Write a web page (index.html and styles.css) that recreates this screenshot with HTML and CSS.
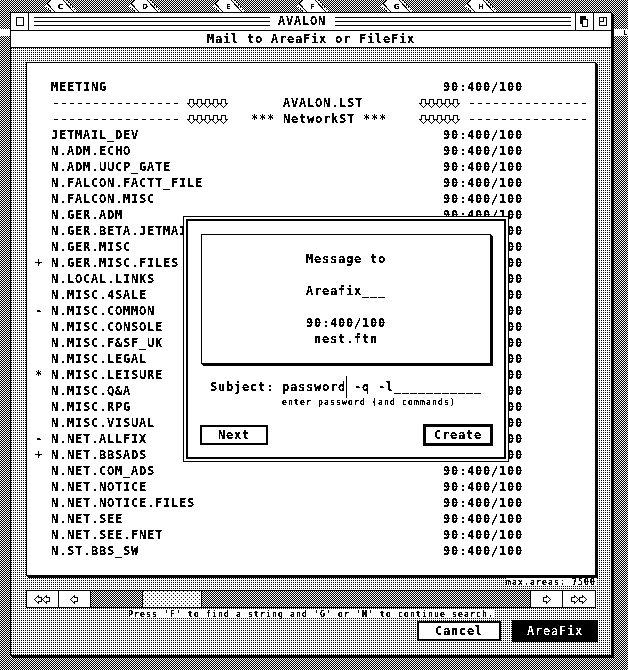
FILE: index.html
```
<!DOCTYPE html>
<html lang="en">
<head>
<meta charset="utf-8">
<title>AVALON</title>
<link rel="stylesheet" href="styles.css">
</head>
<body>
<svg class="defs" width="0" height="0" aria-hidden="true">
  <defs>
    <filter id="mono" x="0" y="0" width="100%" height="100%" color-interpolation-filters="sRGB">
      <feComponentTransfer>
        <feFuncR type="discrete" tableValues="0 0 0 1 1"/>
        <feFuncG type="discrete" tableValues="0 0 0 1 1"/>
        <feFuncB type="discrete" tableValues="0 0 0 1 1"/>
      </feComponentTransfer>
    </filter>
    <symbol id="drive" viewBox="0 0 32 12">
      <path fill="#fff" d="M0 7L5 0H21L32 12H7Z"/>
      <g shape-rendering="crispEdges" fill="none" stroke="#000">
        <path d="M5.500 0L2.500 4L10 12M18 0L29 12"/>
        <path stroke-dasharray="1.500 1.500" d="M1 7L6 12M3 8L7 12M21 0L32 12"/>
      </g>
    </symbol>
    <symbol id="down5" viewBox="0 0 41 9">
      <path id="d" fill="none" stroke="#000" d="M2.5 .5h4v4h2l-4 4l-4-4h2z"/>
      <use href="#d" x="8"/><use href="#d" x="16"/><use href="#d" x="24"/><use href="#d" x="32"/>
    </symbol>
    <symbol id="left" viewBox="0 0 9 9"><path fill="#fff" stroke="#000" d="M4.5 .5l-4 4l4 4v-2h3v-4h-3z"/></symbol>
  </defs>
</svg>
<div class="desktop">
  <div class="drives">
    <div class="drive"><svg><use href="#drive"/></svg><b>C</b></div>
    <div class="drive"><svg><use href="#drive"/></svg><b>D</b></div>
    <div class="drive"><svg><use href="#drive"/></svg><b>E</b></div>
    <div class="drive"><svg><use href="#drive"/></svg><b>F</b></div>
    <div class="drive"><svg><use href="#drive"/></svg><b>G</b></div>
    <div class="drive"><svg><use href="#drive"/></svg><b>H</b></div>
  </div>
  <div class="label-band"><b>L</b></div>
  <div class="window">
    <div class="titlebar">
      <div class="closer"><i></i></div>
      <div class="stripes"></div>
      <div class="title">AVALON</div>
      <div class="stripes"></div>
      <div class="gadget"><svg width="9" height="11"><path d="M0 0h6v8H0z"/><path fill="#fff" stroke="#000" d="M2.5 3.5h5v7h-5z"/></svg></div>
      <div class="gadget"><svg width="8" height="9"><path fill="none" stroke="#000" d="M.5 .5h7v8h-7zM4.5 .5v4h-4"/></svg></div>
    </div>
    <div class="subtitle">Mail to AreaFix or FileFix</div>
    <div class="content">
      <div class="panel list">
        <div class="row">  MEETING                                          90:400/100</div>
        <div class="row">  <span class="dash">----------------</span> <svg class="arrows"><use href="#down5"/></svg>       AVALON.LST       <svg class="arrows"><use href="#down5"/></svg> <span class="dash">---------------</span></div>
        <div class="row">  <span class="dash">----------------</span> <svg class="arrows"><use href="#down5"/></svg>   *** NetworkST ***    <svg class="arrows"><use href="#down5"/></svg> <span class="dash">---------------</span></div>
        <div class="row">  JETMAIL_DEV                                      90:400/100</div>
        <div class="row">  N.ADM.ECHO                                       90:400/100</div>
        <div class="row">  N.ADM.UUCP_GATE                                  90:400/100</div>
        <div class="row">  N.FALCON.FACTT_FILE                              90:400/100</div>
        <div class="row">  N.FALCON.MISC                                    90:400/100</div>
        <div class="row">  N.GER.ADM                                        90:400/100</div>
        <div class="row">  N.GER.BETA.JETMAIL                               90:400/100</div>
        <div class="row">  N.GER.MISC                                       90:400/100</div>
        <div class="row">+ N.GER.MISC.FILES                                 90:400/100</div>
        <div class="row">  N.LOCAL.LINKS                                    90:400/100</div>
        <div class="row">  N.MISC.4SALE                                     90:400/100</div>
        <div class="row">- N.MISC.COMMON                                    90:400/100</div>
        <div class="row">  N.MISC.CONSOLE                                   90:400/100</div>
        <div class="row">  N.MISC.F&amp;SF_UK                                   90:400/100</div>
        <div class="row">  N.MISC.LEGAL                                     90:400/100</div>
        <div class="row">* N.MISC.LEISURE                                   90:400/100</div>
        <div class="row">  N.MISC.Q&amp;A                                       90:400/100</div>
        <div class="row">  N.MISC.RPG                                       90:400/100</div>
        <div class="row">  N.MISC.VISUAL                                    90:400/100</div>
        <div class="row">- N.NET.ALLFIX                                     90:400/100</div>
        <div class="row">+ N.NET.BBSADS                                     90:400/100</div>
        <div class="row">  N.NET.COM_ADS                                    90:400/100</div>
        <div class="row">  N.NET.NOTICE                                     90:400/100</div>
        <div class="row">  N.NET.NOTICE.FILES                               90:400/100</div>
        <div class="row">  N.NET.SEE                                        90:400/100</div>
        <div class="row">  N.NET.SEE.FNET                                   90:400/100</div>
        <div class="row">  N.ST.BBS_SW                                      90:400/100</div>
      </div>
      <div class="small limit">max.areas: 7500</div>
      <div class="scrollbar">
        <div class="sbtn"><svg class="arr"><use href="#left"/></svg><svg class="arr"><use href="#left"/></svg></div>
        <div class="sbtn"><svg class="arr"><use href="#left"/></svg></div>
        <div class="track"><div class="thumb"></div></div>
        <div class="sbtn flip"><svg class="arr"><use href="#left"/></svg></div>
        <div class="sbtn flip end"><svg class="arr"><use href="#left"/></svg><svg class="arr"><use href="#left"/></svg></div>
      </div>
      <div class="small hint">Press 'F' to find a string and 'G' or 'N' to continue search.</div>
      <div class="actions">
        <div class="button cancel">Cancel</div>
        <div class="button selected">AreaFix</div>
      </div>
    </div>
  </div>
  <div class="dialog">
    <div class="dialog-inner">
      <div class="panel message">Message to

Areafix___

90:400/100
 nest.ftn</div>
      <div class="field">Subject: password<i class="caret"></i> -q -l___________</div>
      <div class="small help">enter password (and commands)</div>
      <div class="dialog-actions">
        <div class="button next">Next</div>
        <div class="button create">Create</div>
      </div>
    </div>
  </div>
</div>
</body>
</html>
```
FILE: styles.css
```
* { box-sizing: border-box; }

body {
  margin: 0;
  background: #fff;
  color: #000;
  font: bold 12px/16px "DejaVu Sans Mono", "Liberation Mono", monospace;
  letter-spacing: 0.776px;
  font-variant-ligatures: none;
}

.defs { position: absolute; }

.desktop {
  position: relative;
  width: 628px;
  height: 670px;
  overflow: hidden;
  filter: url(#mono);
  background: repeating-conic-gradient(#000 0 25%, #fff 0 50%) 0 0 / 2px 2px;
}

.drives {
  display: flex;
  gap: 52px;
  height: 12px;
  padding-left: 45px;
}
.drive { position: relative; width: 32px; height: 12px; }
.drive svg { display: block; width: 32px; height: 12px; }
.drive b {
  position: absolute;
  left: 13px;
  top: 2px;
  font: bold 7px/10px "DejaVu Sans", sans-serif;
  letter-spacing: 0;
}

.label-band {
  position: absolute;
  left: 0;
  right: 0;
  top: 29px;
  height: 7px;
  background: #fff;
}
.label-band b {
  display: block;
  margin-left: 623px;
  font: bold 7px/8px "DejaVu Sans", sans-serif;
  letter-spacing: 0;
}

.window {
  position: relative;
  width: 602px;
  height: 644px;
  margin-left: 10px;
  border: 1px solid #000;
  box-shadow: 1px 1px #000, 2px 2px #000;
  background: #fff;
}

.titlebar {
  display: flex;
  height: 18px;
  border-bottom: 1px solid #000;
}
.closer {
  width: 18px;
  border-right: 1px solid #000;
  padding: 4px 0 0 5px;
}
.closer i {
  display: block;
  width: 8px;
  height: 9px;
  border: 1px solid #000;
}
.stripes {
  flex: 1;
  height: 9px;
  margin: 4px 4px 0 5px;
  background: repeating-linear-gradient(#000 0 1px, #fff 1px 4px);
}
.title { width: 56px; line-height: 17px; padding-left: 4px; white-space: nowrap; }
.gadget {
  display: flex;
  align-items: center;
  justify-content: center;
  width: 18px;
  border-left: 1px solid #000;
}

.subtitle {
  height: 17px;
  border-bottom: 1px solid #000;
  text-align: center;
  line-height: 16px;
}

.content {
  height: 607px;
  padding: 14px 15px 0;
  background: conic-gradient(#fff 75%, #000 0) 0 0 / 2px 2px;
}

.panel {
  border: 1px solid #000;
  box-shadow: 1px 1px #000, 2px 2px #000;
  background: #fff;
}
.list {
  width: 570px;
  height: 514px;
  padding: 16px 0 0 8px;
}
.row { height: 16px; white-space: pre; }
.dash {
  display: inline-block;
  height: 16px;
  vertical-align: top;
  font-size: 16px;
  line-height: 15px;
  font-weight: normal;
  letter-spacing: -1.633px;
}
.arrows {
  width: 41px;
  height: 9px;
  margin: 4px -1px 0 0;
  vertical-align: top;
}

.small {
  width: max-content;
  height: 8px;
  background: #fff;
  font-size: 8px;
  line-height: 10px;
  font-weight: normal;
  letter-spacing: 1.184px;
  white-space: pre;
  -webkit-text-stroke: 0.2px #000;
}
.limit { margin: 2px 0 4px 480px; }
.hint { margin: 2px 0 2px 102px; }

.scrollbar {
  display: flex;
  width: 570px;
  height: 18px;
  border: 1px solid #000;
  background: #fff;
}
.sbtn {
  display: flex;
  align-items: center;
  justify-content: center;
  width: 32px;
  border-right: 1px solid #000;
}
.flip { transform: scaleX(-1); }
.end { width: 33px; }
.arr { width: 9px; height: 9px; }
.arr + .arr { margin-left: -1px; }
.track {
  flex: 1;
  padding-left: 51px;
  background: repeating-conic-gradient(#000 0 25%, #fff 0 50%) 0 0 / 2px 2px;
}
.thumb {
  width: 60px;
  height: 16px;
  border: solid #000;
  border-width: 0 1px;
  background:
    conic-gradient(from 0deg at 1px 1px, #0000 75%, #000 0) 0 0 / 4px 4px,
    conic-gradient(from 0deg at 1px 1px, #0000 75%, #000 0) 2px 2px / 4px 4px,
    #fff;
}

.button {
  flex-shrink: 0;
  height: 20px;
  border: 2px solid #000;
  background: #fff;
  line-height: 16px;
  text-align: center;
}
.actions {
  display: flex;
  align-items: center;
  gap: 11px;
  padding-left: 391px;
}
.cancel { width: 84px; }
.selected {
  width: 86px;
  height: 22px;
  line-height: 18px;
  background: #000;
  color: #fff;
}

.dialog {
  position: absolute;
  left: 183px;
  top: 216px;
  width: 326px;
  height: 246px;
  padding: 2px;
  border: 1px solid #000;
  background: #fff;
}
.dialog-inner {
  height: 100%;
  padding: 13px;
  border: 2px solid #000;
}
.message {
  width: 290px;
  height: 130px;
  padding: 16px 0 0 104px;
  white-space: pre;
}
.field {
  height: 16px;
  margin: 15px 0 0 9px;
  white-space: pre;
}
.caret {
  display: inline-block;
  width: 1px;
  height: 22px;
  margin: -3px -1px 0 0;
  vertical-align: top;
  background: #000;
}
.help { margin: 3px 0 0 81px; }
.dialog-actions {
  display: flex;
  align-items: center;
  justify-content: space-between;
  margin: 18px -2px 0 -1px;
}
.next { width: 68px; }
.create { width: 70px; height: 22px; border-width: 3px; }
```
